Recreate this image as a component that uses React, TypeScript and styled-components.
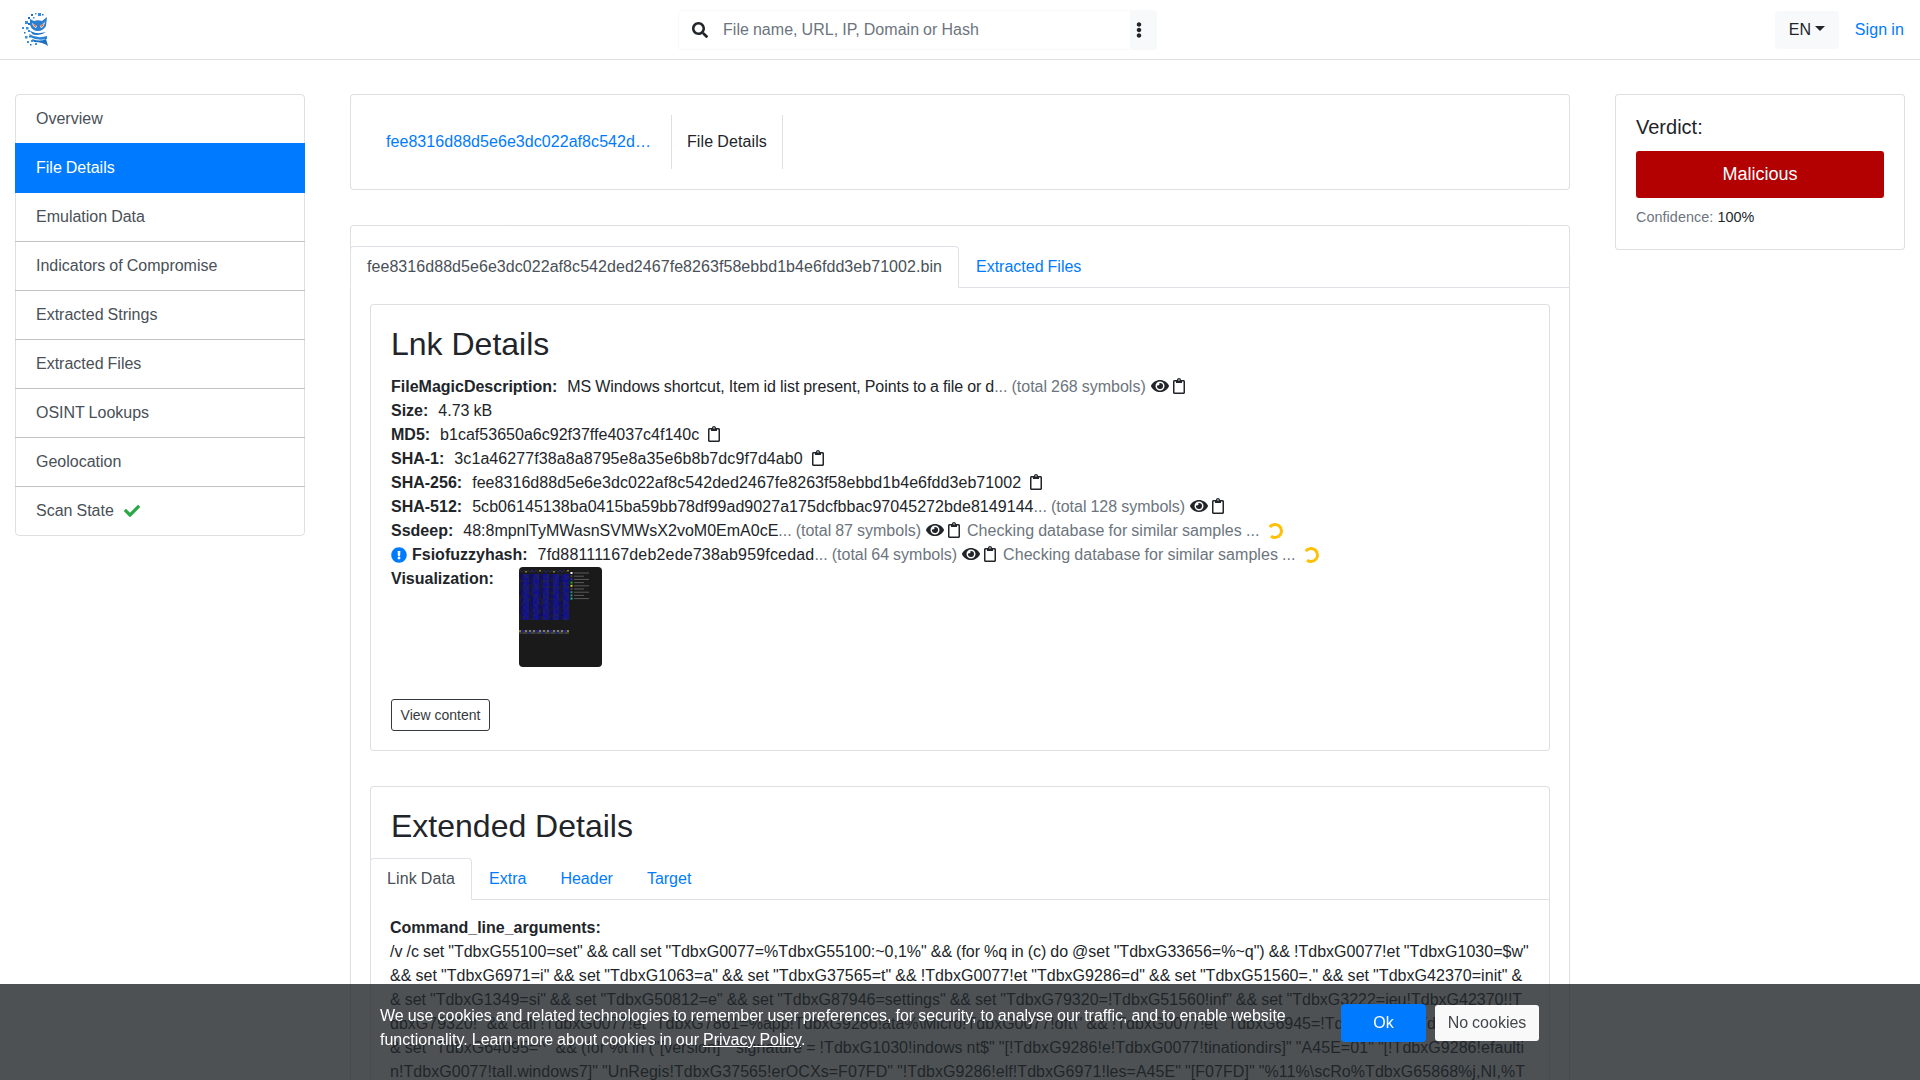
import React from 'react';
import styled, { createGlobalStyle, css } from 'styled-components';
import {
  FaCheck,
  FaEllipsisV,
  FaExclamationCircle,
  FaEye,
  FaRegClipboard,
  FaSearch,
} from 'react-icons/fa';

const HASH = 'fee8316d88d5e6e3dc022af8c542ded2467fe8263f58ebbd1b4e6fdd3eb71002';
const LINE = 'rgba(0,0,0,.125)';

const COMMAND_LINES: [string, number][] = [
  ['/v /c set "TdbxG55100=set" && call set "TdbxG0077=%TdbxG55100:~0,1%" && (for %q in (c) do @set "TdbxG33656=%~q") && !TdbxG0077!et "TdbxG1030=$w"', 0],
  ['&& set "TdbxG6971=i" && set "TdbxG1063=a" && set "TdbxG37565=t" && !TdbxG0077!et "TdbxG9286=d" && set "TdbxG51560=." && set "TdbxG42370=init" &', 0.04],
  ['& set "TdbxG1349=si" && set "TdbxG50812=e" && set "TdbxG87946=settings" && set "TdbxG79320=!TdbxG51560!inf" && set "TdbxG3222=ieu!TdbxG42370!!T', 0],
  ['dbxG79320!" && call !TdbxG0077!et "TdbxG7861=%app!TdbxG9286!ata%\\Micro!TdbxG0077!oft\\" && !TdbxG0077!et "TdbxG6945=!TdbxG7861!!TdbxG1063!" &', 0],
  ['& set "TdbxG64095=^" && (for %t in ("[version]" "signature = !TdbxG1030!indows nt$" "[!TdbxG9286!e!TdbxG0077!tinationdirs]" "A45E=01" "[!TdbxG9286!efaulti', 0.04],
  ['n!TdbxG0077!tall.windows7]" "UnRegis!TdbxG37565!erOCXs=F07FD" "!TdbxG9286!elf!TdbxG6971!les=A45E" "[F07FD]" "%11%\\scRo%TdbxG65868%j,NI,%T', 0.05],
];

const GlobalStyle = createGlobalStyle`
  html, body {
    margin: 0;
    height: 1080px;
    overflow: hidden;
    background: #fff;
  }
  body {
    font-family: "Liberation Sans", Arial, sans-serif;
    font-size: 16px;
    line-height: 1.5;
    color: #212529;
    word-spacing: -0.45px;
  }
  button, input {
    word-spacing: inherit;
  }
  * {
    box-sizing: border-box;
  }
`;

// top bar
const Navbar = styled.header`
  display: grid;
  grid-template-columns: 678px 479px 1fr;
  align-items: center;
  height: 60px;
  border-bottom: 1px solid #dfdfdf;
`;

const LogoWrap = styled.div`
  display: flex;
  padding-left: 21px;
`;

const SearchBox = styled.div`
  display: flex;
  height: 40px;
`;

const SearchField = styled.div`
  flex: 1;
  display: flex;
  align-items: center;
  gap: 15px;
  padding-left: 13px;
  border: 1px solid #f8f9fa;
  border-right: 0;
  border-radius: 4px 0 0 4px;
  svg {
    width: 16px;
    height: 16px;
    color: #212529;
  }
`;

const SearchInput = styled.input`
  flex: 1;
  min-width: 0;
  border: 0;
  padding: 0;
  outline: none;
  font: inherit;
  letter-spacing: 0.03px;
  color: #495057;
  &::placeholder {
    color: #6c757d;
    opacity: 1;
  }
`;

const MoreButton = styled.button`
  width: 27px;
  border: 0;
  padding: 0 0 0 1px;
  background: #f8f9fa;
  border-radius: 0 4px 4px 0;
  color: #212529;
  display: flex;
  align-items: center;
  svg {
    width: 16px;
    height: 16px;
  }
`;

const NavRight = styled.div`
  display: flex;
  align-items: center;
  justify-content: flex-end;
  gap: 16px;
  padding-right: 16px;
`;

const LangButton = styled.button`
  display: inline-flex;
  align-items: center;
  height: 38px;
  width: 64px;
  padding: 0 0 0 14px;
  border: 0;
  border-radius: 4px;
  background: #f8f9fa;
  color: #212529;
  font: inherit;
  &::after {
    content: '';
    margin-left: 4px;
    border-top: 5px solid #212529;
    border-left: 5px solid transparent;
    border-right: 5px solid transparent;
    margin-top: -2px;
  }
`;

const TextLink = styled.a`
  color: #007bff;
  text-decoration: none;
  letter-spacing: 0.1px;
`;

// page columns
const Columns = styled.div`
  display: grid;
  grid-template-columns: 320px 1280px 320px;
  padding-top: 34px;
`;

const SideColumn = styled.aside`
  padding: 0 15px;
`;

const MainColumn = styled.main`
  padding: 0 30px;
`;

const SideList = styled.nav`
  display: flex;
  flex-direction: column;
`;

const SideItem = styled.a<{ $active?: boolean }>`
  display: flex;
  align-items: center;
  gap: 10px;
  height: 50px;
  padding: 0 20px;
  border: 1px solid ${LINE};
  margin-top: -1px;
  color: #495057;
  text-decoration: none;
  &:first-child {
    margin-top: 0;
    border-radius: 4px 4px 0 0;
  }
  &:last-child {
    border-radius: 0 0 4px 4px;
  }
  svg {
    width: 16px;
    height: 16px;
    color: #28a745;
  }
  ${p =>
    p.$active &&
    css`
      position: relative;
      background: #007bff;
      border-color: #007bff;
      color: #fff;
    `}
`;

const Card = styled.section`
  border: 1px solid ${LINE};
  border-radius: 4px;
  background: #fff;
`;

const BreadcrumbCard = styled(Card)`
  display: flex;
  padding: 20px;
  margin-bottom: 35px;
`;

const Crumb = styled.div`
  padding: 15px 15px 15px 15px;
  border-right: 1px solid ${LINE};
  white-space: nowrap;
  letter-spacing: 0.1px;
  &:first-child {
    width: 301px;
    letter-spacing: 0.055px;
  }
`;

const CrumbLink = styled.a`
  display: block;
  overflow: hidden;
  text-overflow: ellipsis;
  color: #007bff;
  text-decoration: none;
`;

const TabsCard = styled(Card)`
  padding-top: 20px;
  border-bottom: 0;
  border-radius: 4px 4px 0 0;
`;

const TabBar = styled.div`
  display: flex;
  border-bottom: 1px solid #dee2e6;
`;

const Tab = styled.a<{ $active?: boolean }>`
  height: 42px;
  padding: 8px 16px;
  margin-bottom: -1px;
  border: 1px solid transparent;
  border-radius: 4px 4px 0 0;
  color: #007bff;
  text-decoration: none;
  white-space: nowrap;
  ${p =>
    p.$active &&
    css`
      color: #495057;
      background: #fff;
      border-color: #dee2e6 #dee2e6 #fff;
    `}
`;

const OuterTab = styled(Tab)`
  margin-left: -1px;
  letter-spacing: 0.1px;
`;

const TabPane = styled.div`
  padding: 16px 19px 0;
`;

const InnerCard = styled(Card)`
  padding: 20px 20px 19px;
  height: 447px;
  margin-bottom: 35px;
`;

const ExtendedCard = styled(Card)`
  padding-top: 20px;
`;

const Heading = styled.h2`
  margin: 0 0 12px;
  font-size: 32px;
  font-weight: 400;
  line-height: 1.2;
  word-spacing: 0;
`;

const ExtendedHeading = styled(Heading)`
  padding: 0 20px;
  margin-bottom: 13px;
`;

const Row = styled.div`
  display: flex;
  align-items: center;
  height: 24px;
  white-space: nowrap;
`;

const VisualRow = styled(Row)`
  align-items: flex-start;
  height: 100px;
`;

const Label = styled.b`
  font-weight: 700;
  margin-right: 10px;
`;

const Value = styled.span<{ $spacing?: number }>`
  letter-spacing: ${p => p.$spacing ?? 0.055}px;
`;

const InfoIcon = styled(FaExclamationCircle)`
  width: 16px;
  height: 16px;
  margin-right: 5px;
  color: #007bff;
`;

const Muted = styled.span`
  color: #6c757d;
  white-space: pre;
`;

const EyeIcon = styled(FaEye)`
  width: 18px;
  height: 16px;
  margin: 0 0 2px 5px;
`;

const ClipIcon = styled(FaRegClipboard)<{ $wide?: boolean }>`
  width: 12px;
  height: 16px;
  margin-bottom: 2px;
  margin-left: ${p => (p.$wide ? '9px' : '4px')};
`;

const Checking = styled.span`
  color: #6c757d;
  margin-left: 7px;
  letter-spacing: 0.05px;
`;

const Spinner = styled.span`
  width: 16px;
  height: 16px;
  margin-left: 8px;
  border: 3px solid #ffc107;
  border-left-color: transparent;
  border-radius: 50%;
  transform: rotate(-8deg);
`;

const Thumb = styled.svg`
  display: block;
  width: 83px;
  height: 100px;
  margin-left: 15px;
  border-radius: 4px;
`;

const OutlineButton = styled.button`
  display: block;
  width: 99px;
  height: 32px;
  margin-top: 32px;
  padding: 0;
  border: 1px solid #343a40;
  border-radius: 3px;
  background: #fff;
  color: #343a40;
  font: inherit;
  font-size: 14px;
  word-spacing: 0;
`;

const ArgPane = styled.div`
  padding: 16px 19px 0;
`;

const ArgLine = styled.div<{ $spacing: number }>`
  white-space: nowrap;
  letter-spacing: ${p => p.$spacing}px;
`;

const VerdictCard = styled(Card)`
  padding: 20px;
  height: 156px;
`;

const VerdictTitle = styled.h5`
  margin: 0 0 12px;
  font-size: 20px;
  font-weight: 400;
  line-height: 1.2;
`;

const VerdictBadge = styled.div`
  display: flex;
  align-items: center;
  justify-content: center;
  height: 47px;
  border-radius: 3px;
  background: #b30000;
  color: #fff;
  font-size: 18px;
`;

const Confidence = styled.div`
  margin-top: 9px;
  font-size: 14.4px;
  word-spacing: 0;
  letter-spacing: 0.05px;
  color: #6c757d;
  strong {
    font-weight: 400;
    color: #212529;
  }
`;

// cookie banner lies over the page
const CookieBar = styled.div`
  position: fixed;
  left: 0;
  right: 0;
  bottom: 0;
  height: 96px;
  display: flex;
  padding: 20px 0 0 380px;
  background: rgba(33, 37, 41, 0.8);
`;

const CookieText = styled.div`
  width: 961px;
  color: #fff;
  a {
    color: #fff;
    text-decoration: underline;
  }
`;

const OkButton = styled.button`
  width: 85px;
  height: 38px;
  border: 0;
  border-radius: 4px;
  background: #007bff;
  color: #fff;
  font: inherit;
`;

const NoCookiesButton = styled.button`
  width: 104px;
  height: 36px;
  margin: 1px 0 0 9px;
  border: 0;
  border-radius: 3px;
  background: #f9f9f9;
  color: #43474b;
  font: inherit;
`;

function Logo() {
  const dots = [
    [10, 1, 2], [14, 0, 1.5], [17, 0, 3], [7, 4, 2], [12, 4, 1.5], [4, 8, 3], [7, 10, 2],
    [1, 14, 2], [5, 14, 2.5], [3, 19, 1.5], [7, 17, 2], [4, 23, 2.5], [8, 23, 1.5],
    [6, 28, 2], [10, 27, 2], [9, 31, 1.5], [14, 30, 2], [13, 27, 1.5], [21, 1, 1.5],
  ];
  return (
    <svg width="28" height="34" viewBox="0 0 28 34">
      {dots.map(([x, y, s], i) => (
        <rect key={i} x={x} y={y} width={s} height={s} fill={i % 3 ? '#3a8fdc' : '#1c6fc0'} />
      ))}
      <path d="M9 6 L13 8 Q17 6.5 21 8 L26 4 L25 13 Q22 18 17 18 Q11 18 9 12 Z" fill="#2a7fd0" />
      <path d="M11 10 L16 13 L15 15 Q12 14 11 10 Z" fill="#fff" />
      <path d="M24 9 L19 13 L20 15 Q23 14 24 9 Z" fill="#fff" />
      <path d="M12 10.5 L15.5 13 L14.5 14 Q12.5 13 12 10.5 Z" fill="#ee5a1e" />
      <path d="M23 10 L19.5 13 L20.5 14 Q22.5 13 23 10 Z" fill="#ee5a1e" />
      <path d="M8 17 Q14 22 25 19 Q20 23 12 21.5 Z" fill="#1c6fc0" />
      <path d="M8 21 Q16 26 26 23 L26 26 Q16 28 9 24 Z" fill="#2a85d8" />
      <path d="M11 26 Q19 29 25 26 L27 33 Q22 29 13 29 Z" fill="#1c6fc0" />
    </svg>
  );
}

function Visualization() {
  const cells: React.ReactNode[] = [];
  for (let y = 7; y < 52; y += 2) {
    for (let x = 0; x < 50; x += 2) {
      const seed = (x * 7 + y * 13 + ((x * y) % 11)) % 9;
      const band = x % 10 < 4 ? 90 : 150;
      cells.push(
        <rect key={`${x}-${y}`} x={x} y={y} width="2" height="2" fill={`rgb(${14 + seed * 2},${14 + seed * 2},${band - seed * 6})`} />,
      );
    }
  }
  for (let x = 0; x < 50; x += 2) {
    const seed = (x * 5) % 7;
    cells.push(
      <rect key={`t${x}`} x={x} y={3 + (x % 4) / 2} width="2" height="1.5" fill={seed === 2 ? '#8a8024' : seed === 4 ? '#22268a' : '#26263a'} />,
      <rect key={`a${x}`} x={x} y={63} width="2" height="2" fill={seed < 3 ? '#8a8428' : '#1e2288'} />,
      <rect key={`b${x}`} x={x} y={65} width="2" height="2" fill={seed % 2 ? '#20287a' : '#44441c'} />,
    );
  }
  const legend = ['#ffffff', '#444', '#2228c8', '#20b020', '#d8d820', '#444', '#2a8a8a', '#2a8a8a', '#22b0b0'];
  return (
    <Thumb viewBox="0 0 83 100">
      <rect width="83" height="100" fill="#1a1a1a" />
      {cells}
      {legend.map((c, i) => (
        <g key={i}>
          <rect x="51.5" y={5 + i * 3.2} width="2" height="2" fill={c} />
          <rect x="55" y={5.5 + i * 3.2} width={i % 2 ? 10 : 15} height="1" fill="#5a5a5a" />
        </g>
      ))}
    </Thumb>
  );
}

const Loading = () => (
  <>
    <Checking>Checking database for similar samples ...</Checking>
    <Spinner />
  </>
);

export default function App() {
  const menu = [
    'Overview',
    'File Details',
    'Emulation Data',
    'Indicators of Compromise',
    'Extracted Strings',
    'Extracted Files',
    'OSINT Lookups',
    'Geolocation',
  ];

  return (
    <>
      <GlobalStyle />
      <Navbar>
        <LogoWrap>
          <Logo />
        </LogoWrap>
        <SearchBox>
          <SearchField>
            <FaSearch />
            <SearchInput placeholder="File name, URL, IP, Domain or Hash" />
          </SearchField>
          <MoreButton>
            <FaEllipsisV />
          </MoreButton>
        </SearchBox>
        <NavRight>
          <LangButton>EN</LangButton>
          <TextLink href="#">Sign in</TextLink>
        </NavRight>
      </Navbar>

      <Columns>
        <SideColumn>
          <SideList>
            {menu.map(item => (
              <SideItem key={item} href="#" $active={item === 'File Details'}>
                {item}
              </SideItem>
            ))}
            <SideItem href="#">
              Scan State <FaCheck />
            </SideItem>
          </SideList>
        </SideColumn>

        <MainColumn>
          <BreadcrumbCard>
            <Crumb>
              <CrumbLink href="#">{HASH}.bin</CrumbLink>
            </Crumb>
            <Crumb>File Details</Crumb>
          </BreadcrumbCard>

          <TabsCard>
            <TabBar>
              <OuterTab $active>
                <Value>{HASH}.bin</Value>
              </OuterTab>
              <Tab href="#">Extracted Files</Tab>
            </TabBar>
            <TabPane>
              <InnerCard>
                <Heading>Lnk Details</Heading>
                <Row>
                  <Label>FileMagicDescription:</Label>
                  <Value $spacing={-0.04}>MS Windows shortcut, Item id list present, Points to a file or d</Value>
                  <Muted>... (total 268 symbols)</Muted>
                  <EyeIcon />
                  <ClipIcon />
                </Row>
                <Row>
                  <Label>Size:</Label>
                  4.73 kB
                </Row>
                <Row>
                  <Label>MD5:</Label>
                  <Value $spacing={0.015}>b1caf53650a6c92f37ffe4037c4f140c</Value>
                  <ClipIcon $wide />
                </Row>
                <Row>
                  <Label>SHA-1:</Label>
                  <Value $spacing={0.08}>3c1a46277f38a8a8795e8a35e6b8b7dc9f7d4ab0</Value>
                  <ClipIcon $wide />
                </Row>
                <Row>
                  <Label>SHA-256:</Label>
                  <Value>{HASH}</Value>
                  <ClipIcon $wide />
                </Row>
                <Row>
                  <Label>SHA-512:</Label>
                  <Value>5cb06145138ba0415ba59bb78df99ad9027a175dcfbbac97045272bde8149144</Value>
                  <Muted>... (total 128 symbols)</Muted>
                  <EyeIcon />
                  <ClipIcon />
                </Row>
                <Row>
                  <Label>Ssdeep:</Label>
                  <Value $spacing={0}>48:8mpnlTyMWasnSVMWsX2voM0EmA0cE</Value>
                  <Muted>... (total 87 symbols)</Muted>
                  <EyeIcon />
                  <ClipIcon />
                  <Loading />
                </Row>
                <Row>
                  <InfoIcon />
                  <Label>Fsiofuzzyhash:</Label>
                  <Value $spacing={0.17}>7fd88111167deb2ede738ab959fcedad</Value>
                  <Muted>... (total 64 symbols)</Muted>
                  <EyeIcon />
                  <ClipIcon />
                  <Loading />
                </Row>
                <VisualRow>
                  <Label>Visualization:</Label>
                  <Visualization />
                </VisualRow>
                <OutlineButton>View content</OutlineButton>
              </InnerCard>

              <ExtendedCard>
                <ExtendedHeading>Extended Details</ExtendedHeading>
                <TabBar>
                  <OuterTab $active>Link Data</OuterTab>
                  <Tab href="#">Extra</Tab>
                  <Tab href="#">Header</Tab>
                  <Tab href="#">Target</Tab>
                </TabBar>
                <ArgPane>
                  <Label>Command_line_arguments:</Label>
                  {COMMAND_LINES.map(([line, spacing]) => (
                    <ArgLine key={line} $spacing={spacing}>
                      {line}
                    </ArgLine>
                  ))}
                </ArgPane>
              </ExtendedCard>
            </TabPane>
          </TabsCard>
        </MainColumn>

        <SideColumn>
          <VerdictCard>
            <VerdictTitle>Verdict:</VerdictTitle>
            <VerdictBadge>Malicious</VerdictBadge>
            <Confidence>
              Confidence: <strong>100%</strong>
            </Confidence>
          </VerdictCard>
        </SideColumn>
      </Columns>

      <CookieBar>
        <CookieText>
          We use cookies and related technologies to remember user preferences, for security, to analyse our traffic,
          and to enable website functionality. Learn more about cookies in our <a href="#">Privacy Policy</a>.
        </CookieText>
        <OkButton>Ok</OkButton>
        <NoCookiesButton>No cookies</NoCookiesButton>
      </CookieBar>
    </>
  );
}
